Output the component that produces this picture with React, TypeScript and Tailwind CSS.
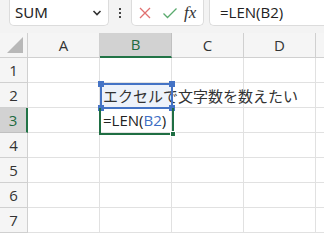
import React from "react";

const font = { fontFamily: '"Open Sans","Noto Sans","Noto Sans CJK JP",sans-serif' };

export default function App() {
  const cols = ["A", "B", "C", "D", ""];
  const rows = [1, 2, 3, 4, 5, 6, 7];
  return (
    <div className="w-[324px] h-[234px] overflow-hidden bg-white relative" style={font}>
      {/* top bar */}
      <div className="h-[33px] bg-[#f3f3f3] flex items-start">
        <div className="ml-[9px] w-[100px] h-[26px] bg-white border border-t-0 border-[#dcdcdc] rounded-b-[5px] flex items-center pl-[5px] pr-[6px]">
          <span className="text-[15px] text-[#222] flex-1 leading-none" style={{ fontFamily: '"Noto Sans",sans-serif' }}>SUM</span>
          <svg width="10" height="8" viewBox="0 0 10 8">
            <path d="M1.5 2 L5 5.5 L8.5 2" fill="none" stroke="#333" strokeWidth="1.6" />
          </svg>
        </div>
        <div className="w-[22px] h-[26px] flex flex-col items-center justify-center gap-[2px]">
          <div className="w-[2px] h-[2px] bg-[#444]" />
          <div className="w-[2px] h-[2px] bg-[#444]" />
          <div className="w-[2px] h-[2px] bg-[#444]" />
        </div>
        <div className="w-[73px] h-[26px] bg-white border border-t-0 border-[#dcdcdc] rounded-b-[5px] flex items-center">
          <svg width="14" height="14" viewBox="0 0 14 14" className="ml-[6px]">
            <path d="M2 2 L12 12 M12 2 L2 12" stroke="#e07070" strokeWidth="1.3" />
          </svg>
          <svg width="16" height="14" viewBox="0 0 16 14" className="ml-[10px]">
            <path d="M1.5 7.5 L5.5 11.5 L14.5 2.5" fill="none" stroke="#5aaa6e" strokeWidth="1.3" />
          </svg>
          <span className="ml-[6px] text-[17px] italic text-[#333] leading-none" style={{ fontFamily: '"Liberation Serif",serif' }}>fx</span>
        </div>
        <div className="ml-[5px] flex-1 h-[26px] bg-white border border-t-0 border-r-0 border-[#dcdcdc] rounded-bl-[5px] flex items-center pl-[10px]">
          <span className="text-[15px] text-[#222] leading-none">=LEN(B2)</span>
        </div>
      </div>
      {/* grid */}
      <div className="grid grid-cols-[28px_72px_72px_72px_72px_72px] auto-rows-[25px] relative">
        <div className="bg-[#f5f5f5] border-r border-b border-[#d0d0d0] relative">
          <svg width="18" height="18" viewBox="0 0 18 18" className="absolute right-[3px] bottom-[3px]">
            <path d="M17 1 L17 17 L1 17 Z" fill="#b8b8b8" />
          </svg>
        </div>
        {cols.map((c, i) => (
          <div
            key={i}
            className={
              c === "B"
                ? "bg-[#d2d2d2] border-r border-[#c0c0c0] border-b-2 border-b-[#217346] text-[#1e6b40] flex items-center justify-center text-[15px]"
                : "bg-[#f5f5f5] border-r border-b border-[#d0d0d0] text-[#333] flex items-center justify-center text-[15px]"
            }
          >
            {c}
          </div>
        ))}
        {rows.map((r) => (
          <React.Fragment key={r}>
            <div
              className={
                r === 3
                  ? "bg-[#d2d2d2] border-r-2 border-r-[#217346] border-b border-[#c0c0c0] text-[#1e6b40] flex items-center justify-center text-[15px]"
                  : "bg-[#f5f5f5] border-r border-b border-[#d0d0d0] text-[#333] flex items-center justify-center text-[15px]"
              }
            >
              {r}
            </div>
            {cols.map((c, i) => {
              const isB2 = r === 2 && c === "B";
              const isB3 = r === 3 && c === "B";
              return (
                <div
                  key={i}
                  className={
                    "border-r border-b border-[#e1e1e1] relative " +
                    (isB2 ? "bg-[#edf2fa] z-10" : "bg-white")
                  }
                >
                  {isB2 && (
                    <span className="absolute left-[3px] top-[2px] whitespace-nowrap text-[15px] text-[#333]" style={{ fontFamily: '"Noto Sans CJK JP",sans-serif' }}>
                      エクセルで文字数を数えたい
                    </span>
                  )}
                  {isB3 && (
                    <span className="absolute left-[3px] top-[1px] whitespace-nowrap text-[15px] text-[#222]">
                      =LEN(<span className="text-[#3c6ec4]">B2</span>)
                    </span>
                  )}
                </div>
              );
            })}
          </React.Fragment>
        ))}
      </div>
      {/* B2 reference border */}
      <div className="absolute left-[100px] top-[83px] w-[73px] h-[26px] border-2 border-[#4473c5] pointer-events-none z-20">
        <div className="absolute -left-[4px] -top-[4px] w-[6px] h-[6px] bg-[#4473c5]" />
        <div className="absolute -right-[4px] -top-[4px] w-[6px] h-[6px] bg-[#4473c5]" />
        <div className="absolute -left-[4px] -bottom-[4px] w-[6px] h-[6px] bg-[#4473c5]" />
        <div className="absolute -right-[4px] -bottom-[4px] w-[6px] h-[6px] bg-[#4473c5]" />
      </div>
      {/* B3 active border */}
      <div className="absolute left-[99px] top-[108px] w-[75px] h-[27px] border-2 border-[#1f6e43] pointer-events-none z-20 border-t-0">
        <div className="absolute -right-[4px] -bottom-[4px] w-[6px] h-[6px] bg-[#1f6e43] border border-white" />
      </div>
    </div>
  );
}
